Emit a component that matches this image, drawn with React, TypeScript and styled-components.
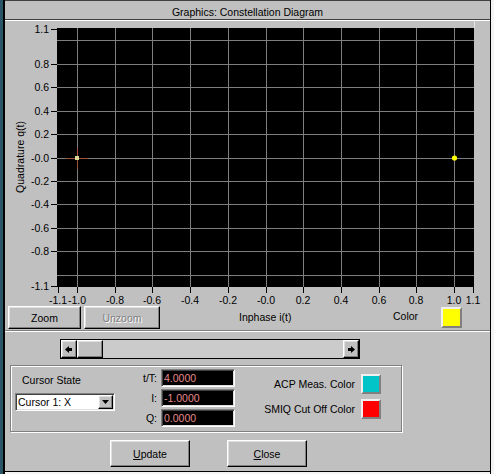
import styled, { createGlobalStyle } from 'styled-components'

const FACE = '#c0c0c0'

const GlobalStyle = createGlobalStyle`
  html, body {
    margin: 0;
    padding: 0;
    background: ${FACE};
  }
  body {
    font-family: 'Liberation Sans', Arial, sans-serif;
    font-size: 10.5px;
    color: #000;
  }
`

// plot scale, in page pixels
const xOf = (v: number) => 265.5 + v * 188.7
const yOf = (v: number) => 157.5 - v * 117.2
const px = (n: number) => Math.round(n) + 0.5

const GRID = [-1, -0.8, -0.6, -0.4, -0.2, 0, 0.2, 0.4, 0.6, 0.8, 1]
const Y_LABELS: [number, string][] = [
  [1.1, '1.1'],
  [0.8, '0.8'],
  [0.6, '0.6'],
  [0.4, '0.4'],
  [0.2, '0.2'],
  [0, '-0.0'],
  [-0.2, '-0.2'],
  [-0.4, '-0.4'],
  [-0.6, '-0.6'],
  [-0.8, '-0.8'],
  [-1.1, '-1.1'],
]
const X_LABELS: [number, string][] = [
  [-1.1, '-1.1'],
  [-1, '-1.0'],
  [-0.8, '-0.8'],
  [-0.6, '-0.6'],
  [-0.4, '-0.4'],
  [-0.2, '-0.2'],
  [0, '-0.0'],
  [0.2, '0.2'],
  [0.4, '0.4'],
  [0.6, '0.6'],
  [0.8, '0.8'],
  [1, '1.0'],
  [1.1, '1.1'],
]

const ConstellationPlot = () => {
  const left = 57
  const right = 474
  const top = 28
  const bottom = 287
  return (
    <svg width={485} height={285} viewBox="5 21 485 285" style={{ display: 'block' }}>
      <rect x={left} y={top} width={right - left} height={bottom - top} fill="#000" />
      <line x1={474.5} y1={21} x2={474.5} y2={top} stroke="#e4e4e4" />
      {GRID.map((v) => (
        <line key={`v${v}`} x1={px(xOf(v))} y1={top} x2={px(xOf(v))} y2={bottom} stroke="#7e7e7e" />
      ))}
      {GRID.map((v) => (
        <line key={`h${v}`} x1={left} y1={px(yOf(v))} x2={right} y2={px(yOf(v))} stroke="#7e7e7e" />
      ))}

      {Y_LABELS.map(([v, t]) => (
        <g key={`yl${v}`}>
          <line x1={51} y1={px(yOf(v))} x2={57} y2={px(yOf(v))} stroke="#000" />
          <text x={49} y={Math.round(yOf(v)) + 4} textAnchor="end" fontSize={10.5} fill="#000">
            {t}
          </text>
        </g>
      ))}
      {X_LABELS.map(([v, t]) => (
        <g key={`xl${v}`}>
          <line x1={px(xOf(v))} y1={bottom} x2={px(xOf(v))} y2={293} stroke="#000" />
          <text x={Math.round(xOf(v))} y={303.5} textAnchor="middle" fontSize={10.5} fill="#000">
            {t}
          </text>
        </g>
      ))}

      <text
        x={21}
        y={157}
        transform="rotate(-90 21 157)"
        textAnchor="middle"
        dominantBaseline="middle"
        fontSize={10.5}
        fill="#000"
      >
        Quadrature q(t)
      </text>

      {/* cursor on the symbol at -1, 0 */}
      <line x1={66} y1={158.5} x2={88} y2={158.5} stroke="#a8482c" strokeOpacity={0.85} />
      <line x1={77.5} y1={148} x2={77.5} y2={169} stroke="#a8482c" strokeOpacity={0.85} />
      <rect x={75} y={156} width={4} height={4} fill="#d9d796" />

      <circle cx={454.5} cy={158} r={2.6} fill="#ffff00" />
    </svg>
  )
}

const ArrowLeft = () => (
  <svg width={8} height={7} viewBox="0 0 8 7">
    <polygon points="0,3.5 4,0 4,7" fill="#000" />
    <rect x={4} y={2} width={3} height={3} fill="#000" />
  </svg>
)

const ArrowRight = () => (
  <svg width={8} height={7} viewBox="0 0 8 7">
    <polygon points="8,3.5 4,0 4,7" fill="#000" />
    <rect x={1} y={2} width={3} height={3} fill="#000" />
  </svg>
)

const ArrowDown = () => (
  <svg width={7} height={4} viewBox="0 0 7 4">
    <polygon points="0,0 7,0 3.5,4" fill="#000" />
  </svg>
)

export default function App() {
  return (
    <>
      <GlobalStyle />
      <Window>
        <TitleBar>Graphics: Constellation Diagram</TitleBar>
        <ChartArea>
          <ConstellationPlot />
        </ChartArea>

        <PlotControls>
          <ZoomButton>Zoom</ZoomButton>
          <ZoomButton $disabled $width={76}>
            Unzoom
          </ZoomButton>
          <AxisLabel>Inphase i(t)</AxisLabel>
          <ColorLabel>Color</ColorLabel>
          <Swatch $color="#ffff00" $size={21} />
        </PlotControls>

        <Separator />

        <ScrollRow>
          <ScrollBar>
            <ScrollArrow>
              <ArrowLeft />
            </ScrollArrow>
            <ScrollThumb />
            <ScrollTrack />
            <ScrollArrow>
              <ArrowRight />
            </ScrollArrow>
          </ScrollBar>
        </ScrollRow>

        <GroupBox>
          <CursorCol>
            <CursorLabel>Cursor State</CursorLabel>
            <Combo>
              <ComboText>Cursor 1: X</ComboText>
              <ComboButton>
                <ArrowDown />
              </ComboButton>
            </Combo>
          </CursorCol>

          <ReadoutGrid>
            <ReadoutLabel>t/T:</ReadoutLabel>
            <Readout>4.0000</Readout>
            <ReadoutLabel>I:</ReadoutLabel>
            <Readout>-1.0000</Readout>
            <ReadoutLabel>Q:</ReadoutLabel>
            <Readout>0.0000</Readout>
          </ReadoutGrid>

          <ColorCol>
            <ColorRow>
              <span>ACP Meas. Color</span>
              <Swatch $color="#00c4c8" $size={20} />
            </ColorRow>
            <ColorRow>
              <span>SMIQ Cut Off Color</span>
              <Swatch $color="#ff0000" $size={20} />
            </ColorRow>
          </ColorCol>
        </GroupBox>

        <ButtonRow>
          <DialogButton>
            <u>U</u>pdate
          </DialogButton>
          <DialogButton>
            <u>C</u>lose
          </DialogButton>
        </ButtonRow>
      </Window>
    </>
  )
}

const raised = `
  border: 1px solid;
  border-color: #fff #000 #000 #fff;
  box-shadow: inset -1px -1px #808080, inset 1px 1px #dfdfdf;
  background: ${FACE};
`

const sunken = `
  border: 1px solid;
  border-color: #808080 #fff #fff #808080;
  box-shadow: inset 1px 1px #404040, inset -1px -1px #dfdfdf;
`

const Window = styled.div`
  position: relative;
  width: 494px;
  height: 474px;
  box-sizing: border-box;
  padding: 0 4px 3px 5px;
  background: ${FACE};
  box-shadow: inset 3px 0 0 #2c5568, inset 5px 0 0 #000, inset -3px 0 0 #f4f4f4,
    inset -4px 0 0 #000, inset 0 -2px 0 #f4f4f4, inset 0 -3px 0 #000;
  overflow: hidden;
`

const TitleBar = styled.div`
  height: 20px;
  box-sizing: border-box;
  padding-top: 5px;
  line-height: 13px;
  text-align: center;
  border-top: 1px solid #404040;
  border-bottom: 1px solid #404040;
  white-space: nowrap;
`

const ChartArea = styled.div`
  border-top: 1px solid #fff;
  height: 285px;
`

const PlotControls = styled.div`
  display: flex;
  align-items: flex-start;
  height: 24px;
  padding-left: 3px;
`

const ZoomButton = styled.div<{ $disabled?: boolean; $width?: number }>`
  ${raised}
  box-sizing: border-box;
  width: ${(p) => p.$width ?? 73}px;
  height: 23px;
  margin-right: 3px;
  display: flex;
  align-items: center;
  justify-content: center;
  color: ${(p) => (p.$disabled ? '#808080' : '#000')};
  text-shadow: ${(p) => (p.$disabled ? '1px 1px #fff' : 'none')};
`

const AxisLabel = styled.div`
  width: 154px;
  margin-left: 76px;
  line-height: 23px;
`

const ColorLabel = styled.div`
  width: 48px;
  line-height: 21px;
`

const Swatch = styled.div<{ $color: string; $size: number }>`
  box-sizing: border-box;
  width: ${(p) => p.$size}px;
  height: ${(p) => p.$size}px;
  margin-top: 1px;
  border: 2px solid;
  border-color: #f0f0f0 #808080 #808080 #f0f0f0;
  background: ${(p) => p.$color};
  flex: none;
`

const Separator = styled.div`
  border-top: 1px solid #808080;
  border-bottom: 1px solid #fff;
`

const ScrollRow = styled.div`
  padding: 7px 0 0 55px;
`

const ScrollBar = styled.div`
  display: flex;
  width: 300px;
  height: 20px;
  box-sizing: border-box;
  border: 1px solid #000;
  background: #cbcbcb;
`

const ScrollArrow = styled.div`
  ${raised}
  box-sizing: border-box;
  width: 16px;
  height: 18px;
  display: flex;
  align-items: center;
  justify-content: center;
  flex: none;
`

const ScrollThumb = styled.div`
  ${raised}
  box-sizing: border-box;
  width: 26px;
  height: 18px;
  flex: none;
`

const ScrollTrack = styled.div`
  flex: 1;
`

const GroupBox = styled.div`
  display: flex;
  width: 392px;
  height: 67px;
  box-sizing: border-box;
  margin: 6px 0 0 5px;
  border: 1px solid #808080;
  box-shadow: inset 1px 1px #fff, 1px 1px #fff;
`

const CursorCol = styled.div`
  width: 108px;
  padding-left: 4px;
  box-sizing: border-box;
  display: flex;
  flex-direction: column;
`

const CursorLabel = styled.div`
  margin: 7px 0 0 7px;
  line-height: 14px;
`

const Combo = styled.div`
  ${sunken}
  margin-top: 6px;
  width: 100px;
  height: 18px;
  box-sizing: border-box;
  background: #fff;
  display: flex;
  align-items: center;
  padding: 0 1px 0 2px;
`

const ComboText = styled.span`
  flex: 1;
  white-space: nowrap;
`

const ComboButton = styled.div`
  ${raised}
  box-sizing: border-box;
  width: 15px;
  height: 14px;
  display: flex;
  align-items: center;
  justify-content: center;
`

const ReadoutGrid = styled.div`
  display: grid;
  grid-template-columns: 38px 74px;
  grid-auto-rows: 18px;
  column-gap: 4px;
  row-gap: 2px;
  padding-top: 3px;
`

const ReadoutLabel = styled.div`
  text-align: right;
  line-height: 18px;
`

const Readout = styled.div`
  ${sunken}
  box-sizing: border-box;
  background: #000;
  color: #e88a8a;
  line-height: 16px;
  padding-left: 2px;
`

const ColorCol = styled.div`
  width: 146px;
  display: flex;
  flex-direction: column;
  align-items: flex-end;
  padding-top: 7px;
  gap: 4px;
`

const ColorRow = styled.div`
  display: flex;
  align-items: center;
  gap: 6px;
  white-space: nowrap;
`

const ButtonRow = styled.div`
  display: flex;
  gap: 37px;
  margin: 8px 0 0 105px;
`

const DialogButton = styled.div`
  ${raised}
  box-sizing: border-box;
  width: 80px;
  height: 27px;
  display: flex;
  align-items: center;
  justify-content: center;

  u {
    text-decoration: underline;
  }
`
